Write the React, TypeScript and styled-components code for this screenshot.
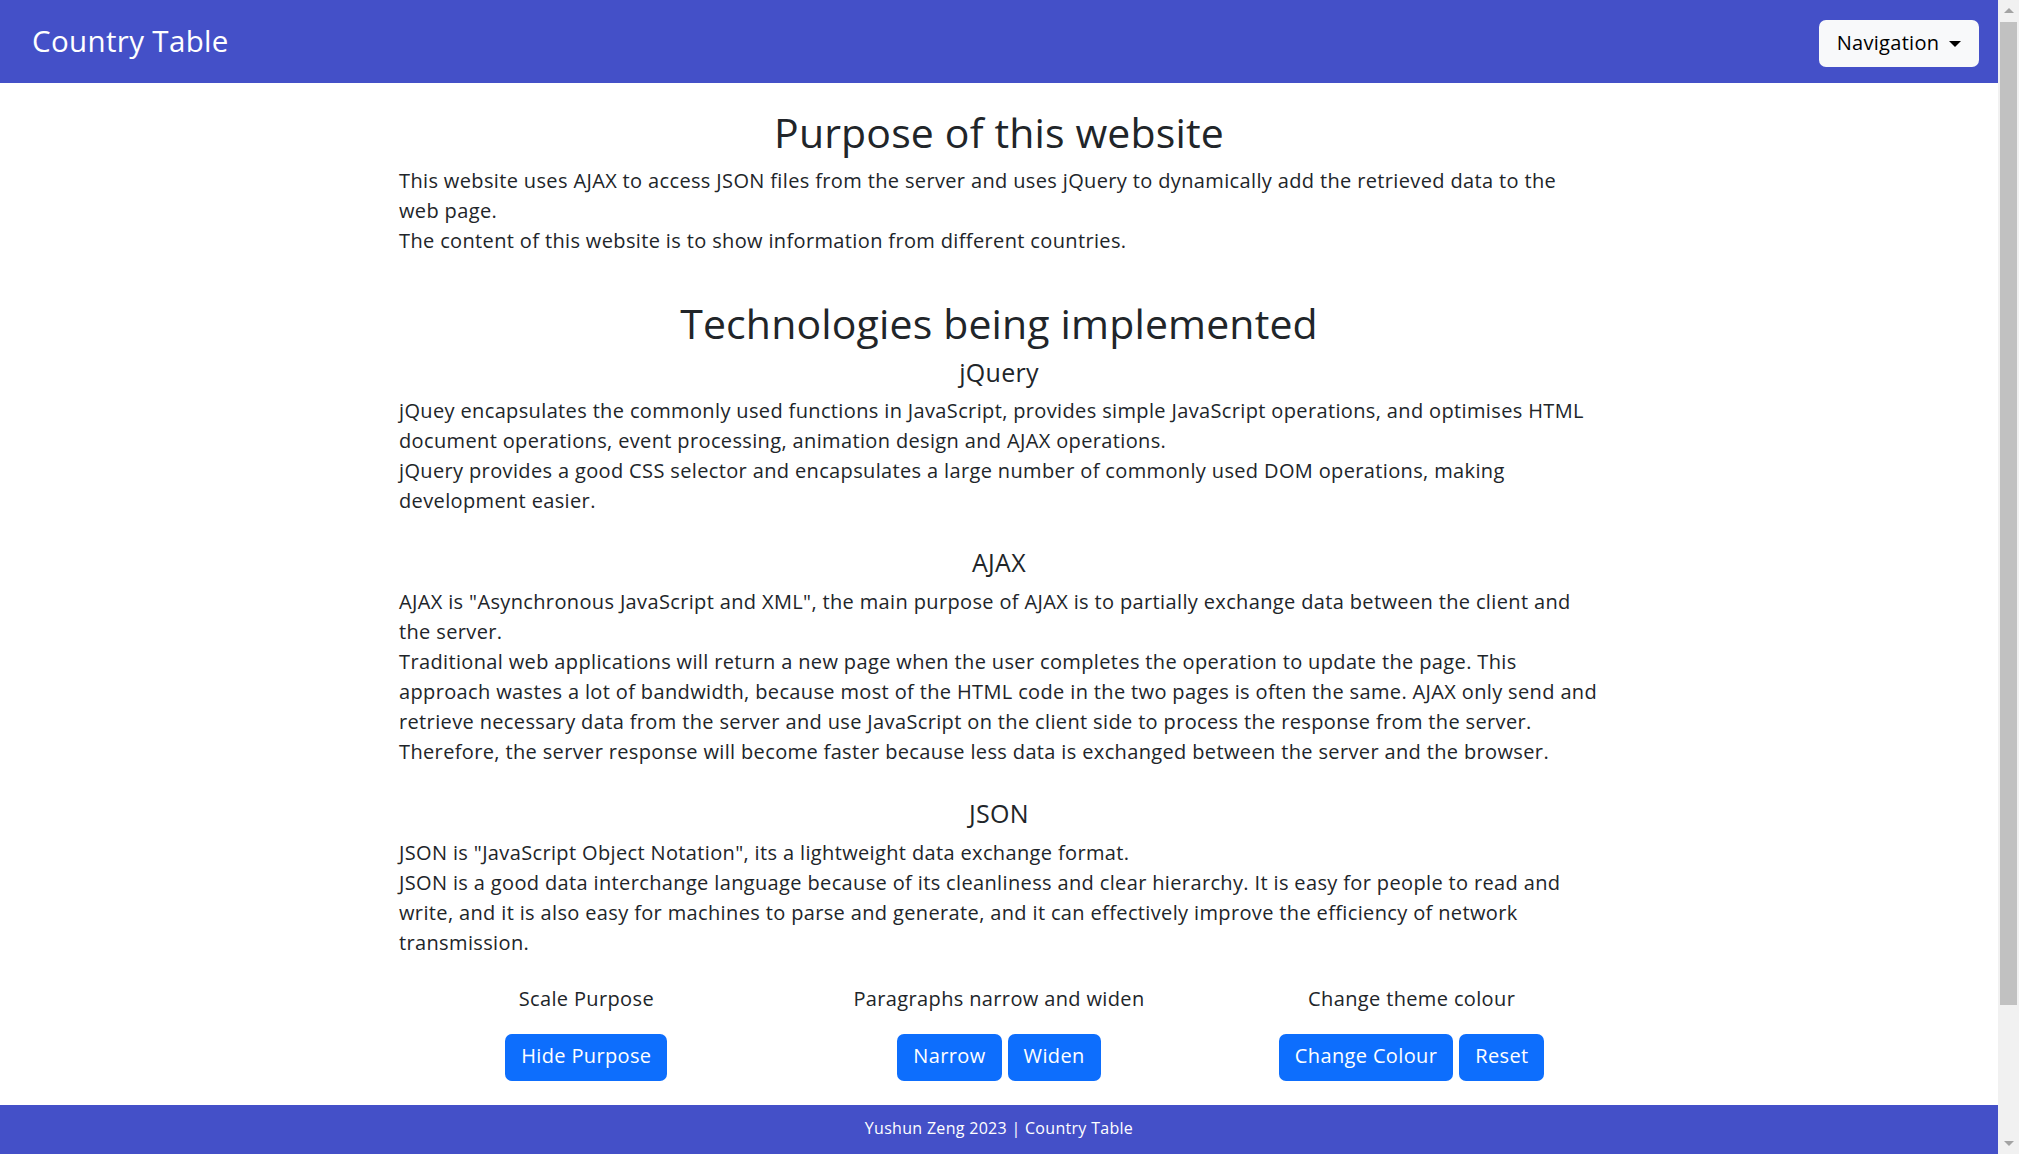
import React from "react";
import styled, { createGlobalStyle } from "styled-components";

const GlobalStyle = createGlobalStyle`
  html, body { margin: 0; padding: 0; overflow: hidden; }
  body {
    font-family: "Open Sans", "Noto Sans", sans-serif;
    color: #212529;
    background: #ffffff;
  }
  * { box-sizing: border-box; }
`;

const THEME = "#4450c8";

const Page = styled.div`
  display: flex;
  width: 2019px;
  height: 1154px;
`;

const Viewport = styled.div`
  flex: 1;
  display: flex;
  flex-direction: column;
  min-width: 0;
`;

const Navbar = styled.header`
  height: 83px;
  flex: none;
  background: ${THEME};
  display: flex;
  align-items: center;
  justify-content: space-between;
  padding: 0 19px 0 32px;
`;

const Brand = styled.a`
  color: #ffffff;
  font-size: 29.5px;
  letter-spacing: 0.35px;
  line-height: 36px;
  text-decoration: none;
  margin-top: -1px;
`;

const NavButton = styled.button`
  height: 47px;
  width: 160px;
  margin-top: 4px;
  border: none;
  border-radius: 7px;
  background: #f8f9fa;
  color: #000000;
  font-family: inherit;
  font-size: 20px;
  letter-spacing: 0.3px;
  display: flex;
  align-items: center;
  justify-content: center;
  gap: 10px;
  padding: 0 0 2px 0;
`;

const Caret = styled.span`
  width: 0;
  height: 0;
  border-left: 6px solid transparent;
  border-right: 6px solid transparent;
  border-top: 6px solid #000000;
  margin-top: 2px;
`;

const Main = styled.main`
  flex: 1;
  overflow: hidden;
  padding-top: 25px;
`;

const Container = styled.div`
  width: 1200px;
  margin: 0 auto;
`;

const PageTitle = styled.h2<{ $gap: number }>`
  margin: ${p => p.$gap}px 0 0;
  font-size: 41px;
  font-weight: 400;
  line-height: 48px;
  letter-spacing: 0.15px;
  text-align: center;
`;

const SectionTitle = styled.h5<{ $gap: number }>`
  margin: ${p => p.$gap}px 0 0;
  font-size: 25px;
  font-weight: 400;
  line-height: 30px;
  letter-spacing: 0.3px;
  text-align: center;
`;

const Paragraph = styled.p<{ $gap: number }>`
  margin: ${p => p.$gap}px 0 0;
  font-size: 20px;
  line-height: 30px;
  letter-spacing: 0.36px;
`;

const TextLine = styled.span`
  display: block;
  white-space: nowrap;
`;

const Controls = styled.div`
  display: grid;
  grid-template-columns: repeat(3, 1fr);
  margin: 26px -19px 0;
`;

const ControlGroup = styled.div`
  display: flex;
  flex-direction: column;
  align-items: center;
`;

const ControlLabel = styled.div`
  font-size: 20px;
  line-height: 30px;
  letter-spacing: 0.36px;
`;

const ButtonRow = styled.div`
  display: flex;
  gap: 6px;
  margin-top: 20px;
`;

const Button = styled.button`
  height: 47px;
  padding: 0 16px 3px;
  border: none;
  border-radius: 7px;
  background: #0d6efd;
  color: #ffffff;
  font-family: inherit;
  font-size: 20px;
  letter-spacing: 0.36px;
  line-height: 30px;
`;

const Footer = styled.footer`
  height: 49px;
  flex: none;
  background: ${THEME};
  color: #ffffff;
  display: flex;
  align-items: center;
  justify-content: center;
  font-size: 16px;
  letter-spacing: 0.3px;
  padding-bottom: 4px;
`;

const Scrollbar = styled.div`
  width: 21px;
  flex: none;
  background: #f1f1f1;
  display: flex;
  flex-direction: column;
  align-items: center;
`;

const ScrollArrow = styled.div<{ $down?: boolean }>`
  height: 21px;
  width: 100%;
  flex: none;
  display: flex;
  align-items: center;
  justify-content: center;
  &::after {
    content: "";
    width: 0;
    height: 0;
    border-left: 5px solid transparent;
    border-right: 5px solid transparent;
    ${p =>
      p.$down
        ? "border-top: 5px solid #a3a3a3;"
        : "border-bottom: 5px solid #a3a3a3;"}
  }
`;

const ScrollTrack = styled.div`
  flex: 1;
  width: 100%;
  padding: 1px 2px 0;
`;

const ScrollThumb = styled.div`
  height: 983px;
  background: #c1c1c1;
`;

type Section = { title: string; lines: string[] };

const purposeLines = [
  "This website uses AJAX to access JSON files from the server and uses jQuery to dynamically add the retrieved data to the",
  "web page.",
  "The content of this website is to show information from different countries.",
];

const sections: Section[] = [
  {
    title: "jQuery",
    lines: [
      "jQuey encapsulates the commonly used functions in JavaScript, provides simple JavaScript operations, and optimises HTML",
      "document operations, event processing, animation design and AJAX operations.",
      "jQuery provides a good CSS selector and encapsulates a large number of commonly used DOM operations, making",
      "development easier.",
    ],
  },
  {
    title: "AJAX",
    lines: [
      'AJAX is "Asynchronous JavaScript and XML", the main purpose of AJAX is to partially exchange data between the client and',
      "the server.",
      "Traditional web applications will return a new page when the user completes the operation to update the page. This",
      "approach wastes a lot of bandwidth, because most of the HTML code in the two pages is often the same. AJAX only send and",
      "retrieve necessary data from the server and use JavaScript on the client side to process the response from the server.",
      "Therefore, the server response will become faster because less data is exchanged between the server and the browser.",
    ],
  },
  {
    title: "JSON",
    lines: [
      'JSON is "JavaScript Object Notation", its a lightweight data exchange format.',
      "JSON is a good data interchange language because of its cleanliness and clear hierarchy. It is easy for people to read and",
      "write, and it is also easy for machines to parse and generate, and it can effectively improve the efficiency of network",
      "transmission.",
    ],
  },
];

const controls = [
  { label: "Scale Purpose", buttons: ["Hide Purpose"] },
  { label: "Paragraphs narrow and widen", buttons: ["Narrow", "Widen"] },
  { label: "Change theme colour", buttons: ["Change Colour", "Reset"] },
];

function Lines({ lines, gap }: { lines: string[]; gap: number }) {
  return (
    <Paragraph $gap={gap}>
      {lines.map((l, i) => (
        <TextLine key={i}>{l}</TextLine>
      ))}
    </Paragraph>
  );
}

export default function App() {
  return (
    <Page>
      <GlobalStyle />
      <Viewport>
        <Navbar>
          <Brand href="#">Country Table</Brand>
          <NavButton type="button">
            Navigation
            <Caret />
          </NavButton>
        </Navbar>
        <Main>
          <Container>
            <PageTitle $gap={0}>Purpose of this website</PageTitle>
            <Lines lines={purposeLines} gap={10} />
            <PageTitle $gap={43}>Technologies being implemented</PageTitle>
            {sections.map((s, i) => (
              <React.Fragment key={s.title}>
                <SectionTitle $gap={i === 0 ? 10 : 31}>{s.title}</SectionTitle>
                <Lines lines={s.lines} gap={i === 0 ? 9 : 10} />
              </React.Fragment>
            ))}
            <Controls>
              {controls.map(c => (
                <ControlGroup key={c.label}>
                  <ControlLabel>{c.label}</ControlLabel>
                  <ButtonRow>
                    {c.buttons.map(b => (
                      <Button key={b} type="button">
                        {b}
                      </Button>
                    ))}
                  </ButtonRow>
                </ControlGroup>
              ))}
            </Controls>
          </Container>
        </Main>
        <Footer>Yushun Zeng 2023 | Country Table</Footer>
      </Viewport>
      <Scrollbar>
        <ScrollArrow />
        <ScrollTrack>
          <ScrollThumb />
        </ScrollTrack>
        <ScrollArrow $down />
      </Scrollbar>
    </Page>
  );
}
